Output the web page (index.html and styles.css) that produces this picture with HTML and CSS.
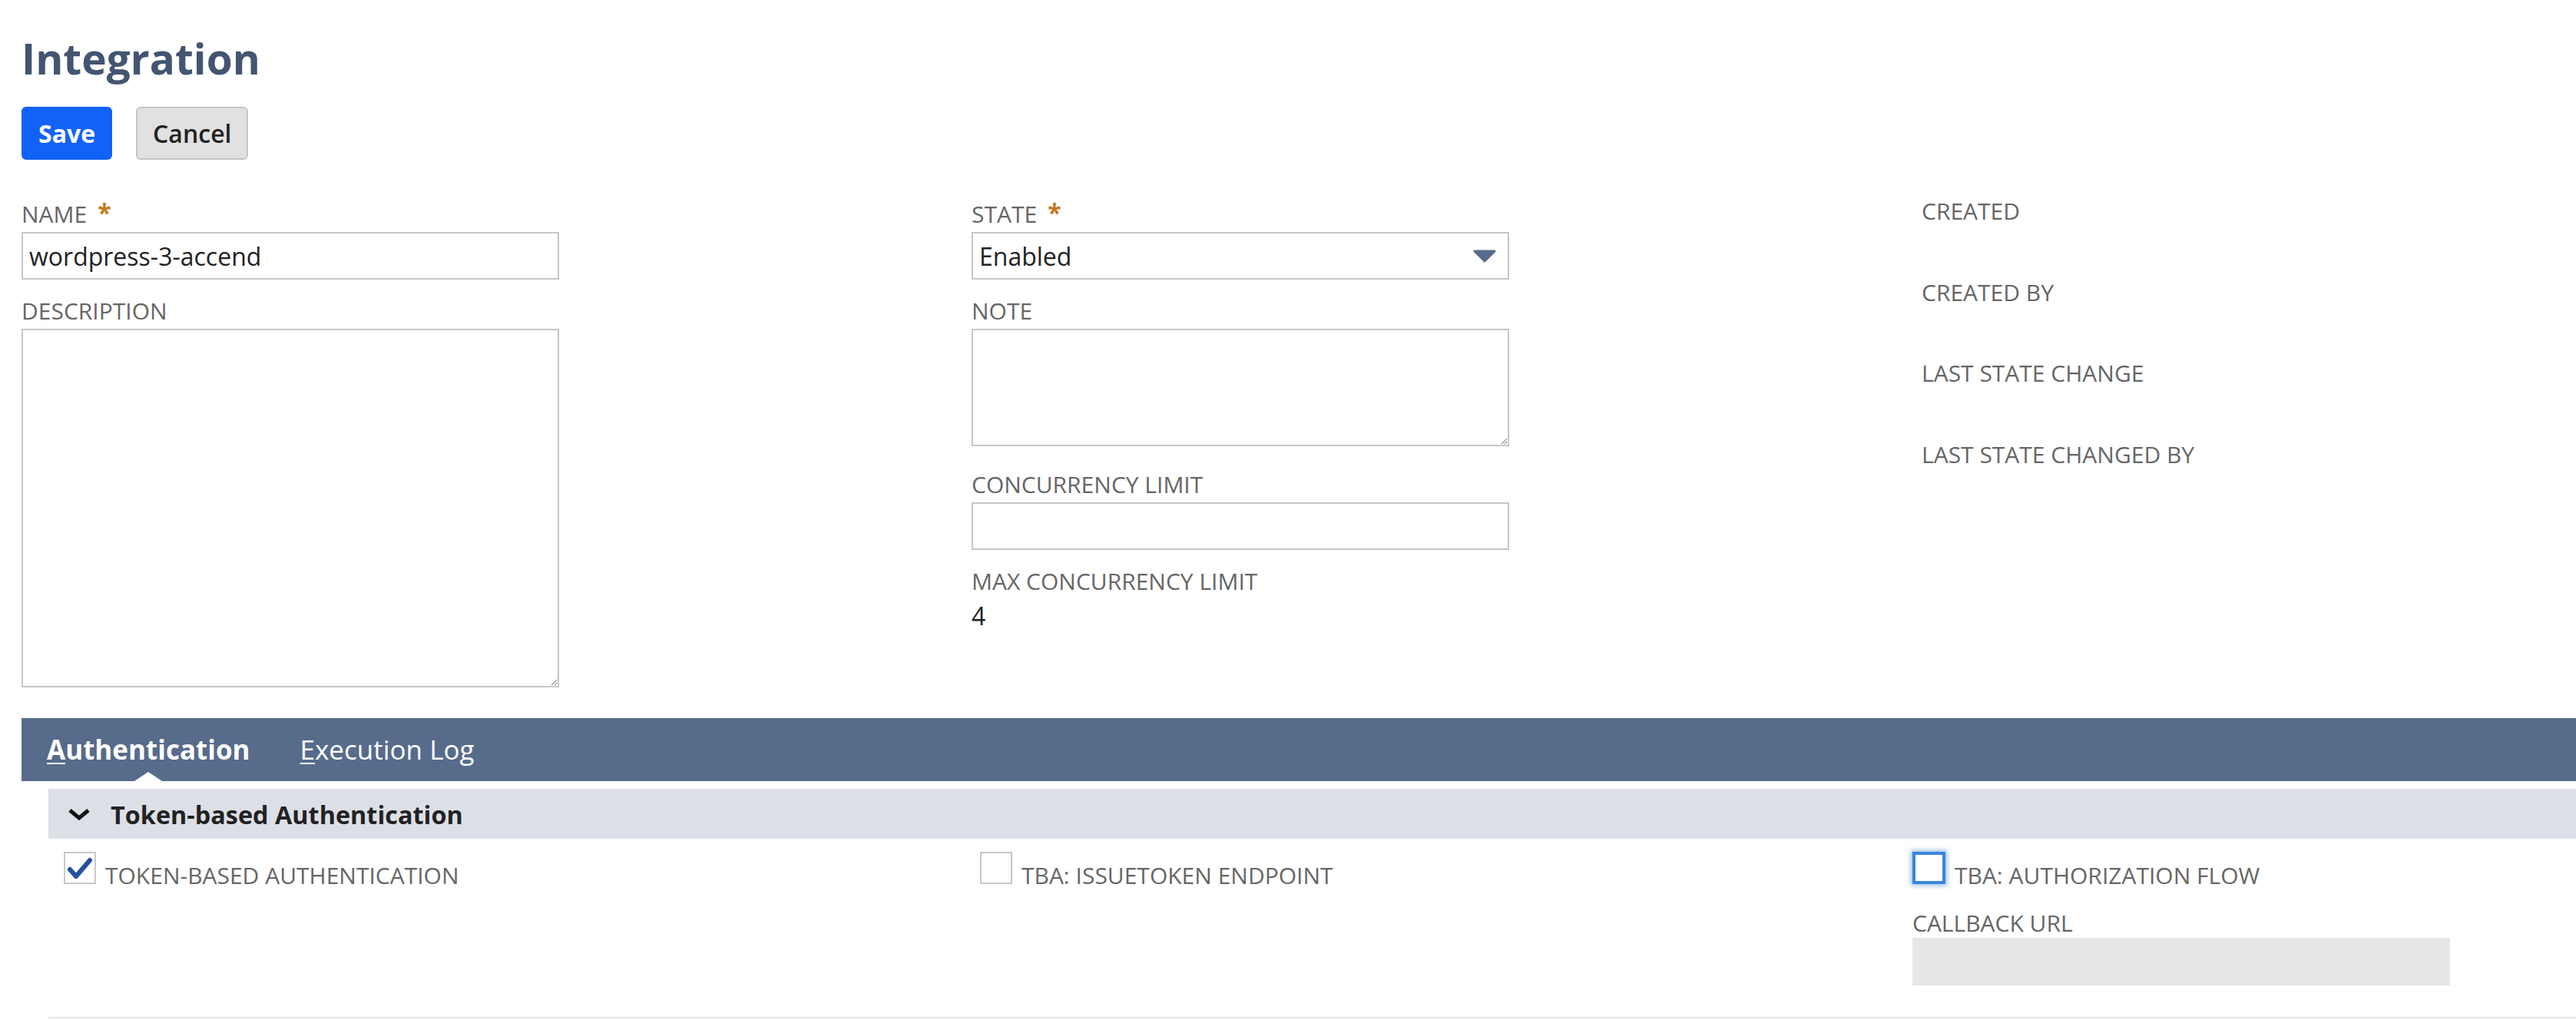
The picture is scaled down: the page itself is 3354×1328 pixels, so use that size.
FILE: index.html
```html
<!DOCTYPE html>
<html lang="en">
<head>
<meta charset="utf-8">
<title>Integration</title>
<link rel="stylesheet" href="styles.css">
</head>
<body>
<div class="page">
  <h1 class="title">Integration</h1>
  <div class="actions">
    <button class="btn btn-primary" type="button">Save</button>
    <button class="btn btn-secondary" type="button">Cancel</button>
  </div>

  <div class="form-grid">
    <div class="col">
      <div class="field">
        <label class="label">NAME<span class="req">*</span></label>
        <input class="input" type="text" value="wordpress-3-accend">
      </div>
      <div class="field field-last">
        <label class="label">DESCRIPTION</label>
        <textarea class="textarea textarea-desc"></textarea>
      </div>
    </div>
    <div class="col">
      <div class="field">
        <label class="label">STATE<span class="req">*</span></label>
        <div class="select">
          <span>Enabled</span>
          <svg class="select-arrow" width="30" height="17" viewBox="0 0 30 17"><path d="M2 2 H28 L15 15 Z" fill="#586c8c" stroke="#586c8c" stroke-width="3" stroke-linejoin="round"/></svg>
        </div>
      </div>
      <div class="field field-note">
        <label class="label">NOTE</label>
        <textarea class="textarea textarea-note"></textarea>
      </div>
      <div class="field">
        <label class="label">CONCURRENCY LIMIT</label>
        <input class="input" type="text" value="">
      </div>
      <div class="field field-last">
        <label class="label">MAX CONCURRENCY LIMIT</label>
        <div class="value">4</div>
      </div>
    </div>
    <div class="col col-meta">
      <div class="meta-item"><span class="label">CREATED</span></div>
      <div class="meta-item"><span class="label">CREATED BY</span></div>
      <div class="meta-item"><span class="label">LAST STATE CHANGE</span></div>
      <div class="meta-item"><span class="label">LAST STATE CHANGED BY</span></div>
    </div>
  </div>

  <div class="tabs">
    <span class="tab tab-active"><u>A</u>uthentication</span>
    <span class="tab"><u>E</u>xecution Log</span>
  </div>

  <div class="tab-panel">
    <div class="section-head">
      <svg class="chevron" width="30" height="16" viewBox="0 0 30 16"><polyline points="3,3 15,13 27,3" fill="none" stroke="#111" stroke-width="5"/></svg>
      <span class="section-title">Token-based Authentication</span>
    </div>
    <div class="section-grid">
      <div class="sg-col">
        <div class="check-row">
          <span class="checkbox">
            <svg width="38" height="38" viewBox="0 0 38 38"><path d="M6 21 L14 30 L32 9" fill="none" stroke="#24509c" stroke-width="6" stroke-linecap="round" stroke-linejoin="round"/></svg>
          </span>
          <span class="check-label">TOKEN-BASED AUTHENTICATION</span>
        </div>
      </div>
      <div class="sg-col">
        <div class="check-row">
          <span class="checkbox"></span>
          <span class="check-label">TBA: ISSUETOKEN ENDPOINT</span>
        </div>
      </div>
      <div class="sg-col">
        <div class="check-row">
          <span class="checkbox checkbox-focus"></span>
          <span class="check-label">TBA: AUTHORIZATION FLOW</span>
        </div>
        <label class="label label-callback">CALLBACK URL</label>
        <div class="readonly-field"></div>
      </div>
    </div>
  </div>
</div>
</body>
</html>
```

FILE: styles.css
```css
* {
  box-sizing: border-box;
}

html, body {
  margin: 0;
  padding: 0;
  background: #ffffff;
}

body {
  font-family: "Open Sans", "Noto Sans", sans-serif;
  color: #222222;
  overflow: hidden;
}

.page {
  padding-left: 28px;
}

.title {
  margin: 0;
  padding-top: 38px;
  font-size: 55px;
  line-height: 76px;
  font-weight: 700;
  color: #435570;
}

.actions {
  margin-top: 25px;
  display: flex;
  gap: 31px;
}

.btn {
  height: 69px;
  padding: 0 20px;
  font-family: "Open Sans", sans-serif;
  font-size: 32px;
  font-weight: 600;
  border-radius: 6px;
  border: 2px solid transparent;
  cursor: pointer;
}

.btn-primary {
  background: #1362f8;
  border-color: #1362f8;
  color: #ffffff;
  font-weight: 700;
}

.btn-secondary {
  background: #e1e1e1;
  border-color: #c6c6c6;
  color: #222222;
}

.form-grid {
  margin-top: 52px;
  display: grid;
  grid-template-columns: 1237px 1237px 1fr;
}

.field {
  margin-bottom: 22px;
}

.field-last {
  margin-bottom: 0;
}

.field-note {
  margin-bottom: 31px;
}

.label {
  display: block;
  font-size: 30px;
  line-height: 38px;
  color: #666666;
  margin-bottom: 4px;
}

.req {
  margin-left: 14px;
  font-size: 32px;
  font-weight: 700;
  color: #c27a1c;
  vertical-align: top;
  line-height: 34px;
}

.input {
  display: block;
  width: 700px;
  height: 62px;
  border: 2px solid #c6c6c6;
  border-radius: 0;
  padding: 0 8px;
  font-family: "Open Sans", sans-serif;
  font-size: 32px;
  color: #222222;
  outline: none;
}

.select {
  width: 700px;
  height: 62px;
  border: 2px solid #c6c6c6;
  padding: 0 15px 0 8px;
  display: flex;
  align-items: center;
  justify-content: space-between;
  font-size: 32px;
  color: #222222;
}

.select-arrow {
  display: block;
}

.textarea {
  display: block;
  width: 700px;
  border: 2px solid #c6c6c6;
  border-radius: 0;
  font-family: "Open Sans", sans-serif;
  font-size: 32px;
  outline: none;
}

.textarea-desc {
  height: 467px;
}

.textarea-note {
  height: 153px;
}

.value {
  font-size: 32px;
  line-height: 44px;
  color: #222222;
}

.col-meta {
  margin-top: -4px;
}

.meta-item {
  height: 105.6px;
}

.tabs {
  margin-top: 40px;
  height: 82px;
  background: #576b8b;
  display: flex;
  gap: 65px;
  padding-left: 33px;
}

.tab {
  position: relative;
  font-size: 35px;
  line-height: 82px;
  color: #ffffff;
}

.tab u {
  text-decoration-thickness: 2px;
  text-underline-offset: 4px;
}

.tab-active {
  font-weight: 700;
}

.tab-active::after {
  content: "";
  position: absolute;
  left: 50%;
  bottom: 0;
  transform: translateX(-50%);
  border-left: 18px solid transparent;
  border-right: 18px solid transparent;
  border-bottom: 12px solid #ffffff;
}

.tab-panel {
  padding-left: 35px;
  margin-top: 10px;
}

.section-head {
  height: 65px;
  background: #dce0e6;
  display: flex;
  align-items: center;
  padding-left: 25px;
  gap: 26px;
}

.chevron {
  display: block;
}

.section-title {
  font-size: 32.4px;
  font-weight: 700;
  color: #222222;
}

.section-grid {
  display: grid;
  grid-template-columns: 1193px 1214px 1fr;
  padding: 17px 0 41px 20px;
  border-bottom: 2px solid #e3e5e9;
}

.check-row {
  display: flex;
  align-items: flex-end;
  gap: 12px;
}

.checkbox {
  width: 42px;
  height: 42px;
  border: 2px solid #c8c8c8;
  background: #ffffff;
  display: flex;
  align-items: center;
  justify-content: center;
  flex: none;
}

.checkbox-focus {
  width: 43px;
  border: 4px solid #3b86d8;
  box-shadow: 0 0 6px 2px rgba(59, 134, 216, 0.55);
}

.check-label {
  font-size: 30px;
  line-height: 22px;
  color: #666666;
}

.label-callback {
  margin-top: 32px;
  margin-bottom: 0;
}

.readonly-field {
  width: 700px;
  height: 62px;
  background: #e6e6e6;
}
```
